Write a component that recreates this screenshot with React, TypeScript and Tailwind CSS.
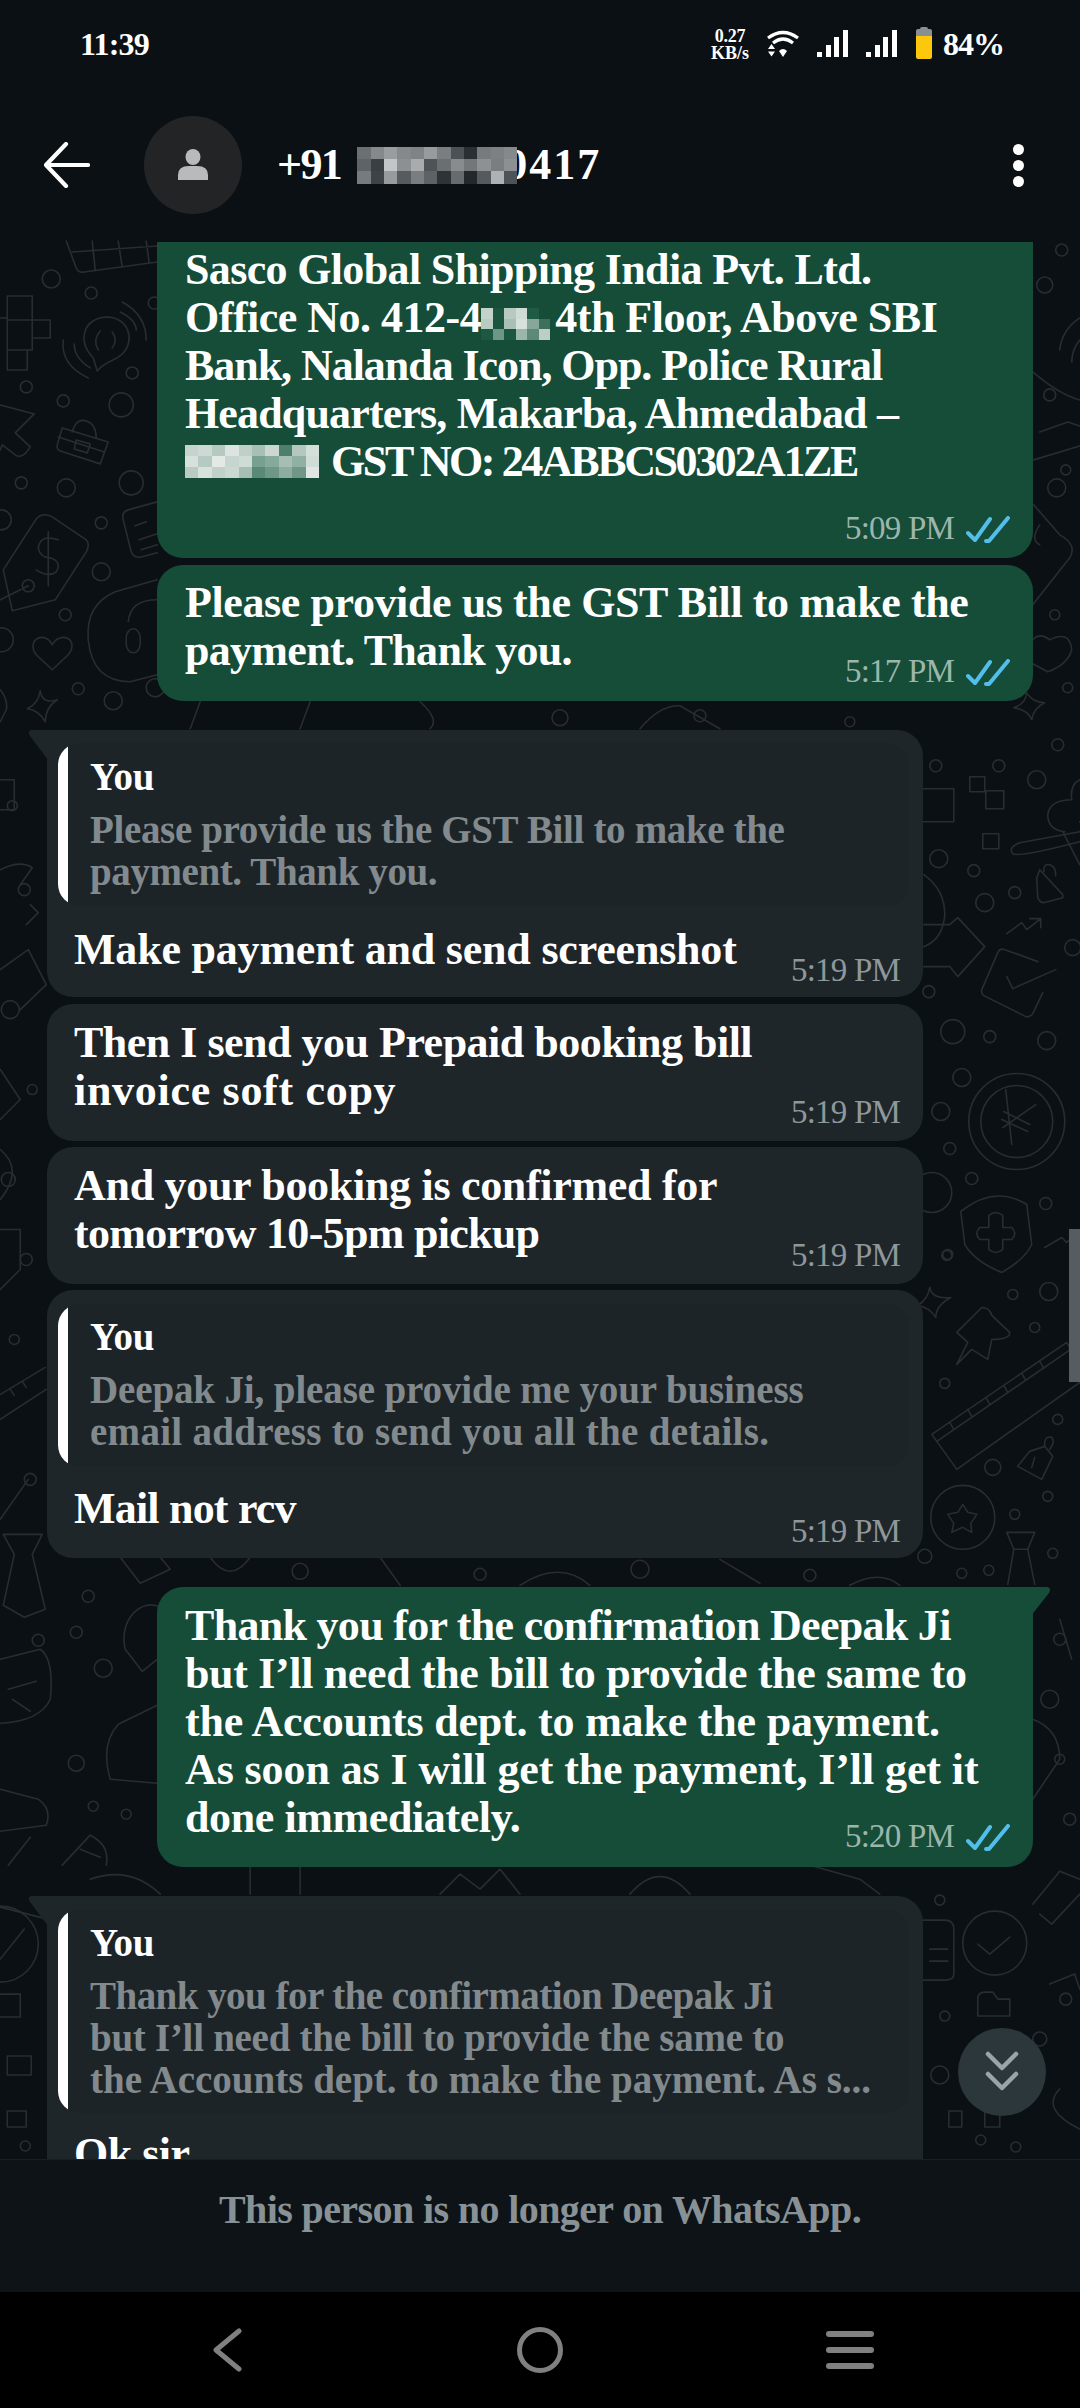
import React from "react";

const circles: [number, number, number][] = [
  [51, 279, 9], [91, 293, 6], [154, 303, 6], [132, 373, 6], [26, 387, 6], [63, 401, 6], [121, 405, 12],
  [21, 483, 6], [66, 488, 9], [131, 483, 12], [101, 523, 6], [101, 572, 9], [65, 615, 6], [78, 689, 6],
  [113, 701, 9], [155, 688, 9], [1, 640, 12], [1, 520, 10],
  [1045, 285, 8], [1062, 250, 6], [1050, 395, 6], [1066, 470, 5], [1057, 488, 9], [1055, 615, 5], [1068, 688, 5],
  [936, 766, 6], [999, 766, 6], [1037, 780, 9], [939, 859, 9], [974, 871, 6], [985, 903, 9], [1015, 893, 6],
  [1073, 948, 8], [1058, 745, 6], [929, 992, 6], [953, 1032, 12], [990, 1037, 6], [1047, 1041, 9], [962, 1078, 9],
  [941, 1112, 9], [950, 1149, 6], [972, 1179, 6], [1046, 1204, 6], [948, 1255, 5], [1017, 1122, 48], [1017, 1122, 36],
  [932, 1193, 20], [947, 1256, 5], [1013, 1295, 5], [1049, 1292, 9], [1035, 1328, 5], [945, 1384, 5], [1058, 1420, 5],
  [993, 1468, 8], [1048, 1497, 5], [1015, 1515, 5], [925, 1557, 7], [962, 1574, 5], [989, 1571, 5], [1053, 1554, 5],
  [963, 1518, 32], [940, 1901, 5], [995, 1944, 32], [945, 2017, 5], [940, 2076, 9], [981, 2141, 5], [1016, 2148, 5],
  [1040, 2040, 7], [1066, 2000, 6], [1060, 1640, 6], [1050, 1700, 9], [1060, 1760, 5], [1070, 1820, 6],
  [88, 1597, 6], [76, 1633, 6], [38, 1641, 6], [103, 1669, 9], [76, 1764, 8], [93, 1807, 5], [126, 1815, 5],
  [25, 2147, 5], [12, 806, 5], [24, 890, 6], [10, 1010, 9], [32, 1090, 5], [8, 1180, 7], [26, 1260, 6], [14, 1340, 5], [30, 1480, 6],
  [0, 1945, 38],
  [560, 718, 8], [700, 716, 6], [850, 722, 5], [300, 1572, 8], [480, 1575, 6], [640, 1570, 9], [810, 1576, 6],
];

const doodles: string[] = [
  // basket, blocks, speech bubble
  "M66 241 L76 268 Q78 273 84 272 L157 262 M72 252 L157 246 M92 241 L95 270 M118 241 L122 267 M146 241 L149 263",
  "M7 296 H32 V320 H7 Z M7 320 H32 V350 H7 Z M32 320 H50 V338 H32 Z M7 350 H27 V370 H7 Z M0 318 H7",
  "M97 371 L93 358 C76 340 84 318 106 317 C128 317 136 340 122 354 C114 362 106 360 97 371 Z M98 350 Q92 340 100 331 M112 332 Q118 340 112 348",
  "M63 340 Q60 365 88 378 M74 344 Q74 358 90 368 M122 302 Q146 315 146 340 M120 312 Q136 320 136 330",
  "M0 405 L34 414 L15 433 L30 447 Q22 460 15 455 L2 445 L0 450",
  "M62 428 L108 442 L100 464 L60 451 Q56 450 57 445 Z M72 432 Q76 418 86 421 Q96 424 96 438 M58 437 L104 452 M76 440 L90 444 L87 453 L74 449 Z",
  "M36 519 Q42 512 52 517 L86 540 Q90 545 86 552 L55 600 L12 611 L3 570 Z M58 540 Q40 534 38 548 Q40 558 50 558 Q62 562 56 572 Q48 578 36 570 M48 532 L48 586",
  "M0 600 L28 586 M28 586 m-6 0 a6 6 0 1 0 12 0 a6 6 0 1 0 -12 0",
  "M157 502 L128 510 Q121 512 123 520 L131 552 Q134 559 142 557 L157 553 M135 526 L146 522 M139 540 L157 534 M141 550 L157 545",
  "M157 580 L115 592 Q85 605 88 640 Q92 682 130 682 L157 675 M128 622 Q130 600 157 600 M126 638 a7 9 0 1 1 14 0 v6 a7 9 0 1 1 -14 0 Z",
  "M52 670 L36 655 C25 640 45 630 52 645 C60 630 80 640 68 655 Z",
  "M40 691 Q42 705 57 700 Q45 708 45 722 Q38 710 27 709 Q38 704 40 691 Z",
  "M0 690 Q8 700 6 710 L0 722",
  // right of outgoing
  "M1033 372 Q1060 395 1080 400 M1080 318 Q1062 330 1060 350 M1080 340 Q1072 350 1072 362",
  "M1040 432 L1068 422 L1080 426 M1034 460 L1080 446",
  "M1034 505 L1060 535 Q1078 545 1070 558 L1033 605 M1040 525 Q1030 540 1040 545",
  "M1033 640 Q1040 632 1050 640 Q1070 630 1072 650 Q1068 665 1048 672 L1033 664",
  "M1027 693 Q1032 702 1045 703 Q1034 708 1032 720 Q1028 710 1014 708 Q1026 704 1027 693 Z",
  // gaps between bubbles
  "M200 702 L190 729 M300 729 L310 702 M420 702 Q440 720 430 729 M640 729 Q660 705 680 706 L720 729",
  "M120 1558 L140 1584 L170 1570 L160 1558 M210 1558 Q230 1586 250 1558 M380 1558 L400 1586 M520 1586 Q560 1560 590 1586 M720 1560 L760 1584 M850 1586 Q880 1570 900 1586",
  "M90 1880 Q130 1866 160 1895 M250 1866 V1895 M300 1866 V1895 M440 1895 L460 1875 L480 1890 L500 1870 L520 1895 M630 1895 Q660 1860 690 1895 M810 1866 L860 1880 L880 1895",
  // right of incoming
  "M920 789 H954 V822 H920",
  "M970 777 H985 V792 H970 Z M986 791 H1004 V809 H986 Z M983 834 H999 V849 H983 Z",
  "M1080 780 Q1070 785 1072 800 Q1050 800 1048 815 Q1048 830 1065 832 M1020 843 L1080 832 Q1084 826 1080 822 M1020 843 Q1008 848 1013 854 Q1018 858 1080 842 M1063 832 L1080 865",
  "M924 875 Q945 890 945 915 Q943 940 924 947",
  "M924 925 L950 925 L958 918 L985 947 L958 977 L950 967 L924 967",
  "M1040 870 L1063 895 L1063 898 L1044 903 Q1040 903 1038 898 L1037 878 Z M1044 872 Q1044 862 1052 866 Q1056 868 1056 876",
  "M1007 934 L1022 923 L1027 930 L1041 919 M1030 919 H1041 V928",
  "M1038 962 L1005 950 Q1000 948 998 953 L982 990 Q981 995 986 997 L1026 1017 Q1032 1018 1034 1012 L1043 993 M1007 977 L1013 989 L1056 970",
  "M1006 1090 L1012 1145 M1036 1105 L1003 1128 M1004 1112 L1030 1125 M1002 1120 L1028 1132",
  "M961 1212 Q995 1185 1027 1205 L1032 1245 Q1025 1260 1002 1273 Q975 1262 965 1245 Z M989 1216 Q996 1210 1003 1216 V1228 H1012 Q1018 1234 1012 1240 H1003 V1250 Q996 1256 989 1250 V1240 H980 Q974 1234 980 1228 H989 Z",
  "M1045 1248 L1062 1238 L1067 1243 L1080 1232",
  "M930 1288 Q932 1300 951 1298 Q936 1306 936 1318 Q930 1308 918 1306 Q928 1300 930 1288 Z",
  "M957 1333 L982 1308 Q990 1308 992 1316 L1010 1333 Q1010 1340 992 1340 L988 1360 L972 1350 L957 1365 L968 1343 Z",
  "M932 1435 L1067 1343 Q1072 1350 1068 1352 L937 1442 Z M937 1442 L957 1470 L1080 1383 M950 1423 L954 1430 M968 1410 L972 1417 M986 1398 L990 1405 M1004 1386 L1008 1393 M1022 1374 L1026 1381 M1040 1362 L1044 1369",
  "M1018 1467 L1042 1480 L1053 1457 L1045 1447 L1030 1452 Z M1045 1447 Q1044 1436 1052 1438 Q1056 1442 1050 1450 M1035 1458 L1032 1468",
  "M963 1505 L968 1513 L977 1515 L971 1524 L972 1533 L963 1528 L952 1533 L954 1524 L948 1515 L958 1513 Z",
  "M1007 1533 H1035 L1028 1550 L1035 1585 M1007 1533 L1014 1550 L1008 1585 M1014 1550 H1028",
  "M923 1921 H945 Q954 1921 954 1930 V1975 Q954 1981 946 1981 H923 M930 1950 H948 M930 1962 H948",
  "M978 1945 L990 1955 L1010 1938",
  "M978 2000 Q978 1993 985 1993 L993 1993 L998 2000 H1010 V2017 H978 Z",
  "M949 2112 H962 V2128 H949 Z M985 2112 V2128 H1000 V2112",
  "M1033 1905 L1060 1872 L1080 1880 M1040 1915 L1052 1925 L1080 1895 M1060 2090 Q1040 2110 1080 2130",
  "M1050 1985 L1075 1975 L1080 1990 M1060 1620 L1072 1660 M1033 1720 Q1060 1730 1060 1760 L1033 1800",
  // left of incoming
  "M0 780 H14 V810 H0 M0 870 Q20 860 32 868 L20 885 M26 925 L38 913 L30 905 M0 970 L28 950 L46 985 L20 1010",
  "M0 1070 L20 1100 L0 1120 M0 1150 Q24 1170 0 1200 M0 1230 H20 V1270 L0 1290",
  "M0 1395 L45 1368 M0 1420 L46 1390 M10 1390 L14 1396 M22 1382 L26 1388",
  "M0 1520 L28 1480 M3 1535 H42 L32 1555 L45 1610 L24 1618 L3 1606 L14 1555 Z",
  "M125 1650 C118 1620 142 1598 160 1608 M125 1650 L142 1672 L157 1660",
  "M0 1660 L40 1650 Q54 1660 50 1700 Q40 1722 0 1724 M8 1690 L36 1682 M12 1700 L30 1712",
  "M157 1706 L118 1725 Q100 1745 110 1780 L157 1784",
  "M0 1790 L38 1800 Q52 1810 46 1826 L0 1832 M62 1866 L90 1836 Q110 1846 106 1866 M80 1850 L100 1858 M8 1866 L30 1838",
  "M0 1908 L47 1920 M0 1960 L24 1930 M0 1995 H20 V2018 H0 M7 2057 H31 V2076 H7 Z M7 2112 H26 V2128 H7 Z",
];

function Doodles() {
  return (
    <svg className="absolute inset-0 w-full h-full" viewBox="0 240 1080 1920" fill="none" stroke="#292d31" strokeWidth="1.6" strokeLinecap="round" strokeLinejoin="round">
      {circles.map(([cx, cy, r], i) => (
        <circle key={i} cx={cx} cy={cy} r={r} />
      ))}
      {doodles.map((d, i) => (
        <path key={i} d={d} />
      ))}
    </svg>
  );
}

function Mosaic({ cols, colors, className }: { cols: number; colors: string[]; className: string }) {
  return (
    <span className={`grid shrink-0 ${className}`} style={{ gridTemplateColumns: `repeat(${cols}, 1fr)` }}>
      {colors.map((c, i) => (
        <span key={i} style={{ backgroundColor: c }} />
      ))}
    </span>
  );
}

const phoneBlur = [
  "#6b7073", "#85898c", "#999d9f", "#85898c", "#7f8386", "#979b9d", "#7a7e81", "#4c5155", "#2a2f33", "#777b7e", "#7d8184", "#85898c",
  "#5e6367", "#3a3f43", "#c2c6c8", "#8c9093", "#a8acae", "#4e5357", "#6a6f72", "#888c8f", "#73777a", "#8d9194", "#7a7e81", "#8c9093",
  "#777b7e", "#3e4347", "#979b9d", "#565b5f", "#7a7e81", "#5d6266", "#2e3337", "#666b6e", "#23282c", "#555a5e", "#aeb2b4", "#4e5357",
];
const officeBlur = [
  "#c3d3cc", "#1b5540", "#b7cac2", "#cfdcd6", "#1f5a45", "#154d39",
  "#b9ccc4", "#1a5540", "#a9c0b7", "#d8e2dd", "#86a79a", "#3c6f5c",
  "#1d5843", "#6f9586", "#1b5641", "#9bb6ab", "#5d8a78", "#bccec6",
];
const cityBlur = [
  "#c5d4ce", "#cdd9d4", "#b6c9c1", "#dbe4e0", "#c0d0c9", "#a8bfb5", "#cbd8d2", "#4e7e6c", "#b4c8c0", "#d3dfd9",
  "#d6e0dc", "#b7cac2", "#e2e9e6", "#c6d5cf", "#cfdbd6", "#78a08f", "#85a99a", "#a6beb3", "#8fb0a2", "#d0dcd7",
  "#b9cbc3", "#d8e2dd", "#c1d1ca", "#cbd8d2", "#a7beb4", "#5a8a77", "#6f9686", "#8cad9f", "#6f9686", "#dfe6e3",
];

function Ticks() {
  return (
    <svg width="44" height="28" viewBox="0 0 44 28" fill="none" stroke="#53bdeb" strokeWidth="4" strokeLinecap="round" strokeLinejoin="round" className="ml-3 mb-0.5">
      <path d="M2 17 L9 24 L24 3" />
      <path d="M20 25 L23 25 L42 2" />
    </svg>
  );
}

function Meta({ time, read, className }: { time: string; read?: boolean; className: string }) {
  return (
    <div className={`flex items-end justify-end h-9 text-[33px] leading-9 font-normal tracking-[-0.8px] ${read ? "text-[#9cb6ac]" : "text-[#8f979b]"} ${className}`}>
      <span>{time}</span>
      {read && <Ticks />}
    </div>
  );
}

function Outgoing({ children, className }: { children: React.ReactNode; className: string }) {
  return (
    <div className={`relative self-end w-[876px] mr-[47px] bg-[#154d39] text-white pl-7 pr-[23px] ${className}`}>
      {children}
    </div>
  );
}

function Incoming({ children, className, tail }: { children: React.ReactNode; className: string; tail?: boolean }) {
  return (
    <div className={`relative w-[876px] ml-[47px] bg-[#1f262a] text-white rounded-[26px] pr-[23px] ${tail ? "rounded-tl-none" : ""} ${className}`}>
      {tail && (
        <svg width="22" height="30" viewBox="0 0 22 30" className="absolute top-0 -left-[19px]" fill="#1f262a">
          <path d="M20 0 H3 Q-1 1 2 6 L20 30 Z" />
        </svg>
      )}
      {children}
    </div>
  );
}

function Quote({ children, className }: { children: React.ReactNode; className: string }) {
  return (
    <div className="flex ml-[11px] -mr-[9px] bg-[#1d2428] rounded-[22px] overflow-hidden text-[39px] leading-[42px]">
      <div className="w-2.5 shrink-0 bg-white" />
      <div className={`pl-[22px] ${className}`}>
        <div className="text-white tracking-[-0.25px]">You</div>
        <div className="mt-[11px] text-[#828a8e]">{children}</div>
      </div>
    </div>
  );
}

function StatusBar() {
  return (
    <div className="h-[90px] flex items-start justify-between pl-[80px] pr-[76px] pt-[26px] text-white font-bold">
      <span className="text-[32px] leading-9 tracking-[-0.8px]">11:39</span>
      <div className="flex items-start">
        <div className="flex flex-col items-center w-10 text-[18px] leading-[17px] font-bold pt-0.5">
          <span className="tracking-[-0.3px]">0.27</span>
          <span>KB/s</span>
        </div>
        <svg width="34" height="28" viewBox="0 0 34 28" fill="none" stroke="#fff" className="ml-4 mt-1">
          <path d="M2 8 Q17 -3 32 8" strokeWidth="3.2" />
          <path d="M7 13 Q17 5 27 13" strokeWidth="3.2" />
          <path d="M2 19 L5.5 14 L9 19 Z M2 21.5 H9 L5.5 26.5 Z M13 21 Q17 17 21 21 L17 27 Z" fill="#fff" stroke="none" />
        </svg>
        <svg width="81" height="27" viewBox="0 0 81 27" fill="#fff" className="ml-[17px] mt-1">
          <rect x="0" y="22" width="5" height="5" />
          <rect x="9" y="15" width="5" height="12" />
          <rect x="17" y="7" width="5" height="20" />
          <rect x="26" y="0" width="5" height="27" />
          <rect x="49" y="22" width="5" height="5" />
          <rect x="58" y="15" width="5" height="12" />
          <rect x="66" y="7" width="5" height="20" />
          <rect x="75" y="0" width="5" height="27" />
        </svg>
        <svg width="18" height="34" viewBox="0 0 18 34" className="ml-[17px]">
          <path d="M5 3 Q5 1 7 1 H11 Q13 1 13 3 H15 Q17 3 17 5 V10 H1 V5 Q1 3 3 3 Z" fill="#8c8f91" />
          <path d="M1 10 H17 V31 Q17 33 15 33 H3 Q1 33 1 31 Z" fill="#fdc70c" />
        </svg>
        <span className="ml-[10px] text-[32px] leading-9 tracking-[-1px]">84%</span>
      </div>
    </div>
  );
}

function Header() {
  return (
    <div className="h-[150px] flex items-center pl-[44px] pr-[56px] text-white">
      <svg width="46" height="46" viewBox="0 0 46 46" fill="none" stroke="#fff" strokeWidth="4.2" strokeLinecap="round" strokeLinejoin="round">
        <path d="M22 2 L2 23 L22 44 M3 23 H44" />
      </svg>
      <div className="ml-[54px] w-[98px] h-[98px] rounded-full bg-[#232426] flex items-center justify-center">
        <svg width="32" height="32" viewBox="0 0 32 32" fill="#b9babb">
          <ellipse cx="16" cy="8" rx="7.5" ry="8" />
          <path d="M1 31 V26 Q1 17 12 17 H20 Q31 17 31 26 V31 Z" />
        </svg>
      </div>
      <div className="ml-[35px] flex items-center text-[44px] leading-[48px] font-bold tracking-[-1.6px]">
        <span>+91</span>
        <Mosaic cols={12} colors={phoneBlur} className="relative z-10 ml-4 -mr-3 w-[160px] h-[37px]" />
        <span className="tracking-[2px]">0417</span>
      </div>
      <div className="ml-auto flex flex-col gap-[5px]">
        <span className="block w-[11px] h-[11px] rounded-full bg-white" />
        <span className="block w-[11px] h-[11px] rounded-full bg-white" />
        <span className="block w-[11px] h-[11px] rounded-full bg-white" />
      </div>
    </div>
  );
}

export default function App() {
  return (
    <div className="w-[1080px] h-[2408px] flex flex-col overflow-hidden bg-[#0b1014] font-['Liberation_Serif',serif] font-bold">
      <StatusBar />
      <Header />

      <div className="relative h-[1920px] overflow-hidden bg-[#0b1014] border-b border-[#1a1f22]">
        <Doodles />

        <div className="relative flex flex-col text-[44px] leading-[48px] tracking-[-0.5px] whitespace-nowrap">
          <Outgoing className="mt-0.5 pt-1 pb-3 rounded-b-[26px]">
            <div className="tracking-[-0.65px]">Sasco Global Shipping India Pvt. Ltd.</div>
            <div className="flex h-12">
              <span>Office No. 412-4</span>
              <Mosaic cols={6} colors={officeBlur} className="w-[69px] h-8 mt-3.5" />
              <span className="ml-[5px]">4th Floor, Above SBI</span>
            </div>
            <div className="tracking-[-1.05px]">Bank, Nalanda Icon, Opp. Police Rural</div>
            <div className="tracking-[-0.85px]">Headquarters, Makarba, Ahmedabad –</div>
            <div className="flex h-12">
              <Mosaic cols={10} colors={cityBlur} className="w-[134px] h-[33px] mt-[7px] mr-3" />
              <span className="tracking-[-2.4px]">GST NO: 24ABBCS0302A1ZE</span>
            </div>
            <Meta time="5:09 PM" read className="mt-6" />
          </Outgoing>

          <Outgoing className="mt-[7px] pt-3.5 pb-3 rounded-[26px]">
            <div className="tracking-[-0.4px]">Please provide us the GST Bill to make the</div>
            <div className="tracking-[-0.7px]">payment. Thank you.</div>
            <Meta time="5:17 PM" read className="-mt-[22px]" />
          </Outgoing>

          <Incoming tail className="mt-[29px] pt-[13px] pb-[9px]">
            <Quote className="py-[13px]">
              <div className="tracking-[-0.35px]">Please provide us the GST Bill to make the</div>
              <div className="tracking-[-0.4px]">payment. Thank you.</div>
            </Quote>
            <div className="pl-[27px] mt-5 tracking-[-0.2px]">Make payment and send screenshot</div>
            <Meta time="5:19 PM" className="-mt-[22px]" />
          </Incoming>

          <Incoming className="mt-[7px] pt-[15px] pb-[11px]">
            <div className="pl-[27px]">Then I send you Prepaid booking bill</div>
            <div className="pl-[27px] tracking-[0.7px]">invoice soft copy</div>
            <Meta time="5:19 PM" className="-mt-[21px]" />
          </Incoming>

          <Incoming className="mt-1.5 pt-[15px] pb-[11px]">
            <div className="pl-[27px] tracking-[-0.3px]">And your booking is confirmed for</div>
            <div className="pl-[27px] tracking-[-0.7px]">tomorrow 10-5pm pickup</div>
            <Meta time="5:19 PM" className="-mt-[21px]" />
          </Incoming>

          <Incoming className="mt-1.5 pt-3.5 pb-[9px]">
            <Quote className="pt-3 pb-3.5">
              <div className="tracking-[-0.13px]">Deepak Ji, please provide me your business</div>
              <div className="tracking-[0.3px]">email address to send you all the details.</div>
            </Quote>
            <div className="pl-[27px] mt-[18px] tracking-[-0.8px]">Mail not rcv</div>
            <Meta time="5:19 PM" className="-mt-5" />
          </Incoming>

          <Outgoing className="mt-[29px] pt-[15px] pb-[13px] rounded-[26px] rounded-tr-none">
            <svg width="22" height="30" viewBox="0 0 22 30" className="absolute top-0 -right-[19px]" fill="#154d39">
              <path d="M0 0 H17 Q22 1 19 6 L0 30 Z" />
            </svg>
            <div className="tracking-[-0.7px]">Thank you for the confirmation Deepak Ji</div>
            <div className="tracking-[-0.35px]">but I’ll need the bill to provide the same to</div>
            <div className="tracking-[-0.2px]">the Accounts dept. to make the payment.</div>
            <div className="tracking-[-0.1px]">As soon as I will get the payment, I’ll get it</div>
            <div className="tracking-[-0.4px]">done immediately.</div>
            <Meta time="5:20 PM" read className="-mt-6" />
          </Outgoing>

          <Incoming tail className="mt-[29px] pt-[13px] pb-10">
            <Quote className="pt-[13px] pb-3">
              <div className="tracking-[-0.53px]">Thank you for the confirmation Deepak Ji</div>
              <div className="tracking-[-0.28px]">but I’ll need the bill to provide the same to</div>
              <div className="tracking-[0px]">the Accounts dept. to make the payment. As s...</div>
            </Quote>
            <div className="pl-[27px] mt-[17px]">Ok sir</div>
          </Incoming>
        </div>

        <div className="absolute left-[958px] top-[1788px] w-[88px] h-[88px] rounded-full bg-[#2c373c] flex items-center justify-center">
          <svg width="36" height="44" viewBox="0 0 36 44" fill="none" stroke="#9aa5a9" strokeWidth="4.5" strokeLinecap="round" strokeLinejoin="round">
            <path d="M4 4 L18 18 L32 4 M4 24 L18 38 L32 24" />
          </svg>
        </div>
        <div className="absolute right-0 top-[989px] w-[11px] h-[153px] bg-[#565c5f]" />
      </div>

      <div className="h-[132px] bg-[#0d1317] flex justify-center pt-[26px] text-[40px] leading-[48px] font-bold tracking-[-0.6px] text-[#889195]">
        This person is no longer on WhatsApp.
      </div>

      <div className="flex-1 bg-black flex items-center pl-[212px]">
        <svg width="30" height="44" viewBox="0 0 30 44" fill="none" stroke="#808080" strokeWidth="5" strokeLinecap="round" strokeLinejoin="round">
          <path d="M27 3 L4 22 L27 41" />
        </svg>
        <div className="ml-[275px] w-[46px] h-[46px] rounded-full border-[5px] border-[#808080]" />
        <div className="ml-[263px] flex flex-col gap-2.5">
          <span className="block w-12 h-[6px] rounded-sm bg-[#808080]" />
          <span className="block w-12 h-[6px] rounded-sm bg-[#808080]" />
          <span className="block w-12 h-[6px] rounded-sm bg-[#808080]" />
        </div>
      </div>
    </div>
  );
}
